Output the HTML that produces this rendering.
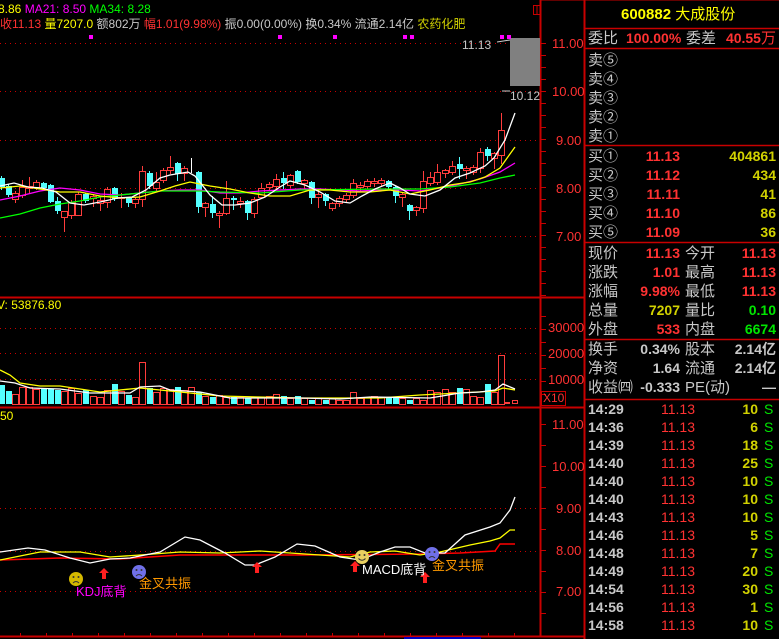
<!DOCTYPE html>
<html><head><meta charset="utf-8">
<style>
html,body{margin:0;padding:0;background:#000;}
body{width:779px;height:639px;overflow:hidden;position:relative;font-family:"Liberation Sans","Noto Sans CJK SC",sans-serif;}
svg{position:absolute;left:0;top:0;}
.t{position:absolute;white-space:nowrap;line-height:1;}
.p{position:absolute;white-space:nowrap;font-size:14px;line-height:19px;height:19px;}
.lb{color:#c8c8c8;}
.n{font-weight:bold;}
.r{color:#ff3232;} .y{color:#d2d200;} .g{color:#00e600;} .w{color:#c8c8c8;}
</style></head><body>
<svg id="s" width="779" height="639" xmlns="http://www.w3.org/2000/svg"></svg>

<!-- header texts -->
<div class="t" style="left:-2px;top:3px;font-size:12px;color:#ffff00">8.86 <span style="color:#ff00ff">MA21: 8.50</span> <span style="color:#00ff00">MA34: 8.28</span></div>
<div class="t" style="left:0;top:18px;font-size:12px;color:#c8c8c8"><span class="r">收11.13</span> <span style="color:#ffff00">量7207.0</span> 额802万 <span class="r">幅1.01(9.98%)</span> 振0.00(0.00%) 换0.34% 流通2.14亿 <span style="color:#d2d200">农药化肥</span></div>
<div class="t" style="left:462px;top:39px;font-size:12px;color:#c8c8c8">11.13</div>
<div class="t" style="left:510px;top:90px;font-size:12px;color:#c8c8c8">10.12</div>
<div class="t" style="left:-3px;top:299px;font-size:12px;color:#ffff00">V: 53876.80</div>
<div class="t" style="left:0;top:410px;font-size:12px;color:#ffff00">50</div>

<!-- axis labels main -->
<div class="t" style="left:552px;top:37px;font-size:13px;color:#ff3232">11.00</div>
<div class="t" style="left:552px;top:85px;font-size:13px;color:#ff3232">10.00</div>
<div class="t" style="left:556px;top:134px;font-size:13px;color:#ff3232">9.00</div>
<div class="t" style="left:556px;top:182px;font-size:13px;color:#ff3232">8.00</div>
<div class="t" style="left:556px;top:230px;font-size:13px;color:#ff3232">7.00</div>
<div class="t" style="left:548px;top:321px;font-size:13px;color:#ff3232">30000</div>
<div class="t" style="left:548px;top:347px;font-size:13px;color:#ff3232">20000</div>
<div class="t" style="left:548px;top:373px;font-size:13px;color:#ff3232">10000</div>
<div class="t" style="left:543px;top:392px;font-size:12px;color:#ff3232">X10</div>
<div class="t" style="left:552px;top:418px;font-size:13px;color:#ff3232">11.00</div>
<div class="t" style="left:552px;top:460px;font-size:13px;color:#ff3232">10.00</div>
<div class="t" style="left:556px;top:502px;font-size:13px;color:#ff3232">9.00</div>
<div class="t" style="left:556px;top:544px;font-size:13px;color:#ff3232">8.00</div>
<div class="t" style="left:556px;top:585px;font-size:13px;color:#ff3232">7.00</div>

<!-- signal texts -->
<div class="t" style="left:76px;top:585px;font-size:13px;color:#ff00ff">KDJ底背</div>
<div class="t" style="left:139px;top:577px;font-size:13px;color:#ff9900">金叉共振</div>
<div class="t" style="left:362px;top:563px;font-size:13px;color:#ffffff">MACD底背</div>
<div class="t" style="left:432px;top:559px;font-size:13px;color:#ff9900">金叉共振</div>

<!-- right panel -->
<div class="t" style="left:621px;top:7px;font-size:15px;color:#ffff00;font-weight:bold">600882 <span style="font-weight:normal">大成股份</span></div>
<div class="p lb" style="left:588px;top:29px;font-size:15px">委比</div>
<div class="p n r" style="left:626px;top:29px">100.00%</div>
<div class="p lb" style="left:686px;top:29px;font-size:15px">委差</div>
<div class="p n r" style="right:3px;top:29px">40.55<span style="font-weight:normal;font-size:15px">万</span></div>

<div class="p lb" style="left:588px;top:51px;font-size:15px">卖⑤</div>
<div class="p lb" style="left:588px;top:70px;font-size:15px">卖④</div>
<div class="p lb" style="left:588px;top:89px;font-size:15px">卖③</div>
<div class="p lb" style="left:588px;top:108px;font-size:15px">卖②</div>
<div class="p lb" style="left:588px;top:127px;font-size:15px">卖①</div>

<div id="buy"></div>

<svg width="0" height="0"></svg>
<script>
var S=document.getElementById('s');
function el(t,a){var e=document.createElementNS('http://www.w3.org/2000/svg',t);for(var k in a)e.setAttribute(k,a[k]);S.appendChild(e);return e;}
function line(x1,y1,x2,y2,c,w,d){var a={x1:x1,y1:y1,x2:x2,y2:y2,stroke:c,'stroke-width':w||1};if(d)a['stroke-dasharray']=d;el('line',a);}
var RED='#c80000';
// dotted grid
[43,91,140,188,236].forEach(function(y){line(0,y+.5,540,y+.5,RED,1,'1 4');});
[328,353,379].forEach(function(y){line(0,y+.5,540,y+.5,RED,1,'1 4');});
[508,551,591].forEach(function(y){line(0,y+.5,540,y+.5,RED,1,'1 4');});
// frames
line(540.5,0,540.5,636,RED,2);
line(584.5,0,584.5,639,RED,2);
line(0,297.5,584,297.5,RED,2);
line(0,407.5,584,407.5,RED,2);
line(0,636.5,584,636.5,RED,2);
line(541,0,779,0,RED,1);
// ticks
for(var y=43;y<297;y+=12){line(541,y+.5,546,y+.5,RED,1);}
for(var y=316;y<405;y+=13){line(541,y+.5,546,y+.5,RED,1);}
for(var y=424;y<630;y+=21){line(541,y+.5,546,y+.5,RED,1);}
for(var x=20;x<540;x+=26){line(x+.5,633,x+.5,636,RED,1);}
el('rect',{x:404,y:637,width:77,height:2,fill:'#0000c0'});
el('rect',{x:541.5,y:391.5,width:24,height:14,fill:'none',stroke:RED});
el('rect',{x:533.5,y:5.5,width:7,height:9,fill:'none',stroke:RED});
line(537,5,537,14,RED,1);
// right panel lines
[28,48,145,242,339,399].forEach(function(y){line(585,y+.5,779,y+.5,RED,1.5);});
// gray box
el('rect',{x:510,y:38,width:30,height:48,fill:'#808080'});
line(497,42,510,40,'#ccc',1);line(502,91,510,91,'#ccc',1);
// magenta markers
[91,280,335,405,412,502,509].forEach(function(x){el('rect',{x:x-2,y:35,width:4,height:4,fill:'#ff00ff'});});
// candles
var C=[['c',178,187,176,189],['c',186,195,184,196],['r',193,199,191,202],['r',187,195,180,197],['r',186,188,177,192],['r',182,187,180,189],['c',183,188,182,190],['c',185,202,184,202],['c',201,211,197,213],['r',211,217,211,231],['r',202,215,200,218],['r',194,215,192,215],['c',194,201,193,202],['r',196,198,194,206],['r',200,203,197,210],['r',189,202,187,207],['c',188,199,187,200],['r',197,198,193,207],['c',198,203,197,206],['r',199,203,197,207],['r',171,199,166,206],['c',173,186,171,188],['r',182,188,172,190],['r',170,180,168,182],['r',167,170,156,173],['c',163,174,162,180],['r',168,173,166,180],['w',158,172,158,172],['c',172,207,171,212],['r',203,207,202,216],['c',204,213,196,217],['r',213,215,211,227],['r',198,213,181,214],['c',198,200,196,209],['r',201,203,197,207],['c',201,213,200,219],['r',199,213,197,217],['r',188,197,183,198],['r',184,187,182,190],['r',179,186,174,189],['c',178,183,172,188],['r',175,185,174,187],['c',171,182,170,183],['r',180,183,179,188],['c',182,198,181,203],['r',194,197,190,207],['c',194,201,193,205],['r',203,208,202,210],['r',198,203,196,206],['r',195,199,193,201],['r',183,195,179,197],['r',185,187,182,190],['r',181,186,179,188],['r',181,183,178,186],['r',180,183,178,185],['c',181,187,180,189],['c',187,196,186,202],['r',194,197,192,206],['c',205,211,204,219],['r',207,210,206,215],['r',181,208,171,212],['r',177,183,172,185],['r',172,182,164,184],['r',170,173,169,177],['r',166,172,161,174],['c',164,169,157,178],['r',168,170,166,178],['r',167,172,165,174],['r',152,168,148,172],['c',149,156,147,160],['r',153,158,152,168],['r',130,155,113,163]];
var V=[385,391,394,387,387,389,389,389,390,391,388,393,390,396,397,390,384,391,395,397,362,388,392,388,389,387,390,387,392,396,397,395,397,397,397,398,397,397,396,394,396,398,396,398,400,398,400,398,400,400,392,398,397,396,397,397,398,398,400,398,400,390,392,389,392,388,389,396,397,384,392,355];
for(var i=0;i<C.length;i++){
 var d=C[i],x=Math.round(1+7.04*i),col=d[0]=='r'?'#ff3c3c':(d[0]=='c'?'#54ffff':'#ffffff');
 line(x+.5,d[3],x+.5,d[4]+1,col,1);
 if(d[0]=='r'){el('rect',{x:x-2.5,y:d[1]+.5,width:6,height:Math.max(1,d[2]-d[1]),fill:'#000',stroke:col});}
 else if(d[0]=='c'){el('rect',{x:x-2,y:d[1],width:6,height:Math.max(1,d[2]-d[1]),fill:col});}
 var vt=V[i]||398,vc=d[0]=='c'?'#54ffff':'#ff3c3c';
 if(d[0]=='c')el('rect',{x:x-2,y:vt,width:6,height:404-vt,fill:vc});
 else el('rect',{x:x-2.5,y:vt+.5,width:6,height:404-vt,fill:'none',stroke:vc});
}
el('rect',{x:505,y:402,width:5,height:2,fill:'#ff3c3c'});
el('rect',{x:512.5,y:400.5,width:5,height:3,fill:'none',stroke:'#ff3c3c'});
function pl(pts,c,w){el('polyline',{points:pts.map(function(p){return p.join(',')}).join(' '),fill:'none',stroke:c,'stroke-width':w||1.3});}
pl([[0,200],[20,196],[40,191],[60,188],[80,190],[100,194],[120,195],[140,193],[160,191],[180,190],[200,190],[220,193],[240,193],[260,191],[280,190],[300,189],[320,189],[340,190],[360,191],[380,190],[400,190],[420,191],[440,188],[460,184],[480,179],[500,172],[515,163]],'#ff00ff');
pl([[0,218],[20,214],[40,208],[60,204],[80,201],[100,197],[120,195],[140,193],[160,191],[200,191],[220,192],[260,193],[300,190],[380,189],[420,189],[450,187],[480,183],[500,178],[515,175]],'#00ff00');
pl([[0,188],[20,186],[40,189],[60,192],[80,192],[100,196],[120,198],[140,197],[160,191],[175,186],[190,182],[210,186],[230,189],[250,193],[270,196],[290,196],[310,190],[330,190],[350,192],[370,192],[390,190],[410,194],[430,190],[450,185],[470,182],[485,177],[500,168],[515,147]],'#ffff00');
pl([[0,186],[14,183],[28,187],[42,188],[56,192],[70,203],[84,205],[100,202],[118,198],[132,197],[146,190],[160,178],[170,175],[188,172],[195,176],[210,195],[222,205],[235,205],[250,203],[265,197],[280,187],[290,181],[305,185],[320,192],[335,201],[350,203],[362,196],[375,189],[390,183],[400,188],[410,194],[425,196],[440,190],[455,178],[470,173],[485,166],[494,158],[505,140],[515,113]],'#ffffff');
// volume MAs
pl([[0,370],[10,375],[20,383],[40,386],[60,386],[80,389],[100,392],[140,388],[180,392],[220,396],[260,397],[300,398],[380,398],[420,395],[460,393],[495,391],[503,388],[515,390]],'#ffff00');
pl([[0,381],[15,383],[30,388],[60,389],[90,393],[130,393],[140,387],[160,386],[170,390],[200,392],[230,398],[300,398],[340,399],[370,397],[430,398],[460,393],[480,392],[495,390],[503,384],[515,389]],'#ffffff');
// bottom lines
pl([[0,560],[60,558],[120,559],[180,555],[300,555],[420,554],[460,553],[495,551],[500,544],[515,544]],'#ff0000',1.5);
pl([[0,560],[40,552],[80,552],[110,557],[140,555],[180,552],[220,553],[260,551],[290,553],[320,555],[350,557],[370,552],[395,551],[420,555],[440,552],[470,545],[490,541],[500,538],[510,530],[515,530]],'#ffff00');
pl([[0,552],[28,548],[45,550],[70,558],[90,563],[110,559],[130,558],[160,552],[185,537],[200,540],[225,553],[245,565],[255,565],[275,557],[297,544],[315,546],[340,557],[360,560],[380,552],[395,547],[410,547],[425,553],[445,553],[465,535],[490,527],[500,523],[510,510],[515,497]],'#ffffff');
// icons
function face(x,y,c,smile){el('circle',{cx:x,cy:y,r:7,fill:c});el('circle',{cx:x-2.5,cy:y-2,r:1,fill:'#333'});el('circle',{cx:x+2.5,cy:y-2,r:1,fill:'#333'});
 el('path',{d:smile?'M'+(x-3.5)+' '+(y+1.5)+' Q'+x+' '+(y+5)+' '+(x+3.5)+' '+(y+1.5):'M'+(x-3)+' '+(y+4)+' Q'+x+' '+(y+1)+' '+(x+3)+' '+(y+4),fill:'none',stroke:'#333','stroke-width':1});}
function arrow(x,y){el('path',{d:'M'+x+' '+(y-6)+' L'+(x+5)+' '+(y-1)+' L'+(x+2)+' '+(y-1)+' L'+(x+2)+' '+(y+5)+' L'+(x-2)+' '+(y+5)+' L'+(x-2)+' '+(y-1)+' L'+(x-5)+' '+(y-1)+' Z',fill:'#ff2020'});}
face(76,579,'#d4b800',false);arrow(104,574);face(139,572,'#7070e8',false);
arrow(257,568);face(362,557,'#e8d060',true);arrow(355,567);arrow(425,578);face(432,554,'#7070e8',false);
</script>
<script>
var B=document.getElementById('buy'),h='';
function row(top,lab,a,b,c){return '<div class="p lb" style="left:588px;top:'+top+'px;font-size:15px">'+lab+'</div>';}
var buys=[['买①','11.13','404861'],['买②','11.12','434'],['买③','11.11','41'],['买④','11.10','86'],['买⑤','11.09','36']];
buys.forEach(function(b,i){var t=147+i*19;h+=row(t,b[0])+'<div class="p n r" style="right:99px;top:'+t+'px">'+b[1]+'</div><div class="p n y" style="right:3px;top:'+t+'px">'+b[2]+'</div>';});
var st=[['现价','11.13','r','今开','11.13','r'],['涨跌','1.01','r','最高','11.13','r'],['涨幅','9.98%','r','最低','11.13','r'],['总量','7207','y','量比','0.10','g'],['外盘','533','r','内盘','6674','g']];
st.forEach(function(s,i){var t=244+i*19;h+=row(t,s[0])+'<div class="p n '+s[2]+'" style="right:99px;top:'+t+'px">'+s[1]+'</div><div class="p lb" style="left:685px;top:'+t+'px;font-size:15px">'+s[3]+'</div><div class="p n '+s[5]+'" style="right:3px;top:'+t+'px">'+s[4]+'</div>';});
var s2=[['换手','0.34%','股本','2.14亿'],['净资','1.64','流通','2.14亿'],['收益㈣','-0.333','PE(动)','—']];
s2.forEach(function(s,i){var t=340+i*19;h+=row(t,s[0])+'<div class="p n w" style="right:99px;top:'+t+'px">'+s[1]+'</div><div class="p lb" style="left:685px;top:'+t+'px;font-size:15px">'+s[2]+'</div><div class="p n w" style="right:3px;top:'+t+'px">'+s[3]+'</div>';});
var tk=[['14:29','10'],['14:36','6'],['14:39','18'],['14:40','25'],['14:40','10'],['14:40','10'],['14:43','10'],['14:46','5'],['14:48','7'],['14:49','20'],['14:54','30'],['14:56','1'],['14:58','10']];
tk.forEach(function(k,i){var t=400+i*18;h+='<div class="p n w" style="left:588px;top:'+t+'px">'+k[0]+'</div><div class="p r" style="left:661px;top:'+t+'px;font-size:14px">11.13</div><div class="p n y" style="right:21px;top:'+t+'px">'+k[1]+'</div><div class="p g" style="left:764px;top:'+t+'px">S</div>';});
B.innerHTML=h;
</script>
</body></html>
